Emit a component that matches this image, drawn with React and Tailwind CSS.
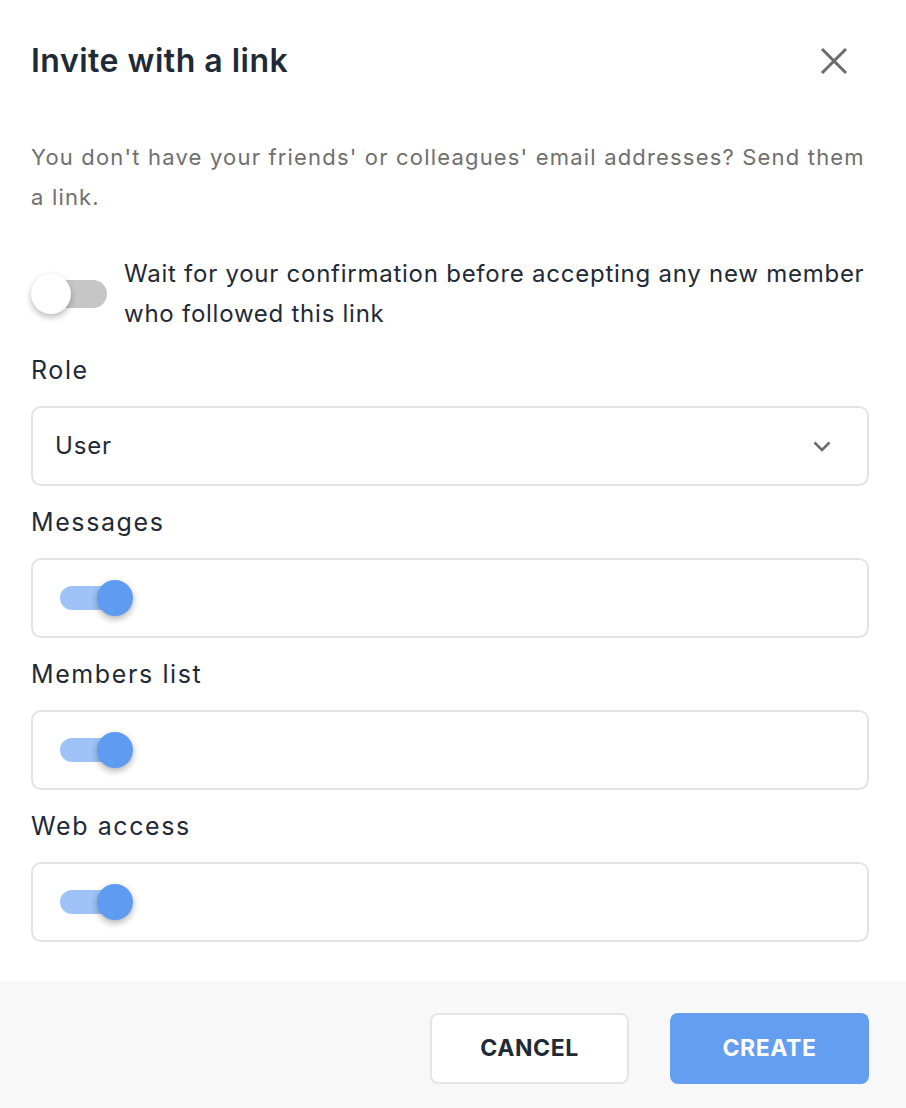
const OffSwitch = () => {
  return <div className="relative w-[76px] h-[40px] shrink-0">
      <div className="absolute left-[6px] right-0 top-[6px] h-[28px] rounded-full bg-[#c6c6c6]" />
      <div className="absolute left-0 top-0 w-[40px] h-[40px] rounded-full bg-white shadow-[0_3px_6px_rgba(0,0,0,0.28)]" />
    </div>;
};

const OnSwitch = () => {
  return <div className="relative w-[74px] h-[36px]">
      <div className="absolute left-0 w-[60px] top-[6px] h-[24px] rounded-full bg-[#9fc3f6]" />
      <div className="absolute left-[37px] top-0 w-[36px] h-[36px] rounded-full bg-[#5f9cf1] shadow-[0_3px_7px_rgba(0,0,0,0.3)]" />
    </div>;
};

const Field = ({
  label,
  children
}) => {
  return <div className="mt-[18px] first:mt-0">
      <div className="text-[25px] leading-[36px] tracking-[1.6px] text-[#1f2a37] mb-[18px]">{label}</div>
      <div className="h-[80px] rounded-[10px] border-2 border-[#e3e3e3] flex items-center">
        {children}
      </div>
    </div>;
};

export default function App() {
  return <div className="w-[906px] h-[1108px] bg-white flex flex-col" style={{
    fontFamily: "Inter, 'Noto Sans', sans-serif"
  }}>
      <div className="flex-1 pl-[31px] pr-[37px]">
        
        <div className="flex items-center justify-between pt-[41px]">
          <h1 className="text-[32px] leading-[40px] font-semibold tracking-[0.5px] text-[#1f2a37]">Invite with a link</h1>
          <button className="w-[40px] h-[40px] flex items-center justify-center mr-[15px]">
            <svg width="28" height="28" viewBox="0 0 28 28" fill="none" stroke="#6b6b6b" strokeWidth="3">
              <path d="M2 2 L26 26 M26 2 L2 26" />
            </svg>
          </button>
        </div>

        
        <p className="mt-[56px] text-[22px] leading-[40px] tracking-[1.18px] text-[#6f6f6f]">
          You don't have your friends' or colleagues' email addresses? Send them a link.
        </p>

        
        <div className="flex items-center gap-[17px] mt-[37px]">
          <OffSwitch />
          <div className="text-[24px] leading-[40px] tracking-[0.75px] text-[#1f2a37]">
            Wait for your confirmation before accepting any new member who followed this link
          </div>
        </div>

        <div className="mt-[18px]">
          <Field label="Role">
            <div className="flex-1 flex items-center justify-between pl-[22px] pr-[36px]">
              <span className="text-[24px] tracking-[0.8px] text-[#1f2a37]">User</span>
              <svg width="18" height="11" viewBox="0 0 18 11" fill="none" stroke="#6b6b6b" strokeWidth="2.6">
                <path d="M1.5 1.5 L9 9 L16.5 1.5" />
              </svg>
            </div>
          </Field>
          <Field label="Messages">
            <div className="pl-[27px]"><OnSwitch /></div>
          </Field>
          <Field label="Members list">
            <div className="pl-[27px]"><OnSwitch /></div>
          </Field>
          <Field label="Web access">
            <div className="pl-[27px]"><OnSwitch /></div>
          </Field>
        </div>
      </div>

      
      <div className="h-[126px] bg-[#f8f8f8] flex justify-end items-start gap-[41px] pt-[31px] pr-[37px]">
        <button className="w-[199px] h-[71px] rounded-[8px] bg-white border-2 border-[#e5e5e5] text-[23px] font-bold tracking-[0.6px] text-[#1f2a37]">
          CANCEL
        </button>
        <button className="w-[199px] h-[71px] rounded-[8px] bg-[#649ef0] text-[23px] font-bold tracking-[0.6px] text-white">
          CREATE
        </button>
      </div>
    </div>;
}
